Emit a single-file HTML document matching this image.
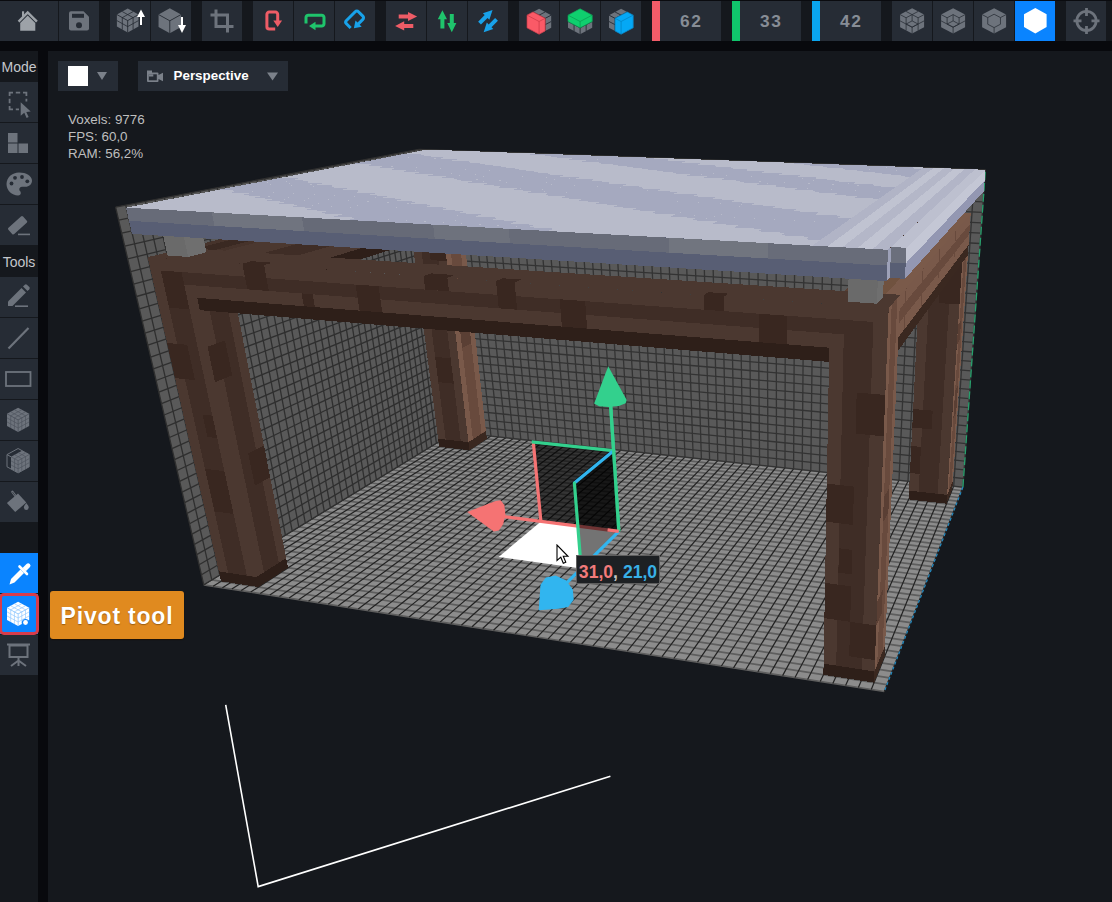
<!DOCTYPE html>
<html><head><meta charset="utf-8"><title>Voxel editor</title>
<style>
html,body{margin:0;padding:0;}
body{width:1112px;height:902px;overflow:hidden;background:#08090d;font-family:"Liberation Sans",sans-serif;position:relative;}
#vp{position:absolute;left:48px;top:51px;width:1064px;height:851px;background:#15181d;overflow:hidden;}
#vp>svg{position:absolute;left:-48px;top:-51px;}
#top{position:absolute;left:0;top:0;width:1112px;height:40px;background:#15181d;border-top:1px solid #0a0b0f;}
.tb{margin-top:-1px}
.tb{position:absolute;top:1px;height:40px;width:40px;background:#262c35;}
.tb svg,.sb svg{display:block}
.num{color:#878d96;font-weight:bold;font-size:17.300px;letter-spacing:1.600px;padding-left:1.600px;box-sizing:border-box;line-height:40px;text-align:center;}
#side{position:absolute;left:0;top:51px;width:38px;height:851px;background:#15181d;}
.sb{position:absolute;left:0;width:38px;height:40px;background:#262c35;}
.lbl{position:absolute;left:0;width:38px;color:#c4c7cc;font-size:14px;text-align:center;}
.dd{position:absolute;top:10px;height:30px;background:#262c35;}
#stats{position:absolute;left:20px;top:59.500px;color:#bfbfbf;font-size:13.400px;line-height:17.200px;white-space:pre;}
#tip{position:absolute;left:2px;top:540px;width:134px;height:48px;background:#e08a1f;border-radius:3px;color:#fff;font-weight:bold;font-size:23px;line-height:50px;text-align:center;letter-spacing:0.800px;text-shadow:0 1px 1px rgba(90,50,0,.5);box-shadow:0 1px 1px #1c1208;}
#coord{position:absolute;left:528px;top:504px;width:82px;height:27px;background:#1d2023;border:1px solid #5e5e5e;font-weight:bold;font-size:17.600px;line-height:33px;overflow:hidden;text-align:center;color:#aaa;white-space:pre;}
</style></head><body>
<div id="vp"><svg width="1112" height="902" viewBox="0 0 1112 902">
<g>
<polygon points="962.9,487.1 454.4,432.2 203.8,584.8 884.3,691.5" fill="#8c8c8c" />
<path d="M962.9 487.1L454.4 432.2M961.6 490.5L450.0 434.9M960.3 494.0L445.5 437.6M958.9 497.5L441.0 440.3M957.5 501.1L436.4 443.1M956.1 504.8L431.8 446.0M954.7 508.4L427.1 448.8M953.3 512.2L422.3 451.7M951.8 516.0L417.5 454.7M950.3 519.9L412.6 457.6M948.8 523.8L407.6 460.7M947.3 527.8L402.6 463.7M945.7 531.8L397.5 466.8M944.2 535.9L392.3 470.0M942.6 540.1L387.1 473.2M940.9 544.3L381.8 476.4M939.3 548.6L376.4 479.7M937.6 553.0L370.9 483.0M935.9 557.4L365.4 486.4M934.1 562.0L359.8 489.8M932.4 566.6L354.1 493.3M930.6 571.2L348.3 496.8M928.7 576.0L342.4 500.3M926.9 580.8L336.5 504.0M925.0 585.8L330.4 507.7M923.0 590.8L324.3 511.4M921.1 595.9L318.1 515.2M919.1 601.0L311.7 519.0M917.1 606.3L305.3 522.9M915.0 611.7L298.8 526.9M912.9 617.2L292.2 530.9M910.7 622.7L285.4 535.0M908.5 628.4L278.6 539.2M906.3 634.2L271.7 543.4M904.1 640.1L264.6 547.7M901.7 646.1L257.4 552.1M899.4 652.2L250.2 556.5M897.0 658.4L242.7 561.0M894.5 664.8L235.2 565.6M892.0 671.3L227.6 570.3M889.5 677.9L219.8 575.0M886.9 684.6L211.8 579.8M884.3 691.5L203.8 584.8" stroke="#5e5e5e" stroke-width="1.7" fill="none" />
<path d="M962.9 487.1L884.3 691.5M953.7 486.1L871.3 689.5M944.5 485.1L858.4 687.5M935.3 484.1L845.6 685.5M926.2 483.1L832.8 683.5M917.1 482.1L820.2 681.5M908.0 481.2L807.6 679.5M899.0 480.2L795.0 677.5M890.0 479.2L782.6 675.6M881.1 478.3L770.2 673.6M872.2 477.3L757.9 671.7M863.3 476.3L745.7 669.8M854.5 475.4L733.5 667.9M845.7 474.4L721.4 666.0M836.9 473.5L709.4 664.1M828.2 472.5L697.5 662.2M819.5 471.6L685.6 660.4M810.8 470.7L673.8 658.5M802.2 469.7L662.0 656.7M793.6 468.8L650.3 654.8M785.0 467.9L638.7 653.0M776.5 467.0L627.2 651.2M768.0 466.1L615.7 649.4M759.6 465.1L604.3 647.6M751.2 464.2L592.9 645.8M742.8 463.3L581.6 644.0M734.4 462.4L570.4 642.3M726.1 461.5L559.2 640.5M717.8 460.6L548.1 638.8M709.6 459.7L537.1 637.1M701.4 458.9L526.1 635.3M693.2 458.0L515.2 633.6M685.0 457.1L504.3 631.9M676.9 456.2L493.5 630.2M668.8 455.3L482.7 628.5M660.7 454.5L472.0 626.8M652.7 453.6L461.4 625.2M644.7 452.7L450.8 623.5M636.7 451.9L440.3 621.9M628.8 451.0L429.9 620.2M620.9 450.2L419.4 618.6M613.0 449.3L409.1 617.0M605.2 448.5L398.8 615.4M597.4 447.6L388.6 613.7M589.6 446.8L378.4 612.1M581.8 445.9L368.2 610.6M574.1 445.1L358.2 609.0M566.4 444.3L348.1 607.4M558.7 443.5L338.2 605.8M551.1 442.6L328.2 604.3M543.5 441.8L318.4 602.7M535.9 441.0L308.5 601.2M528.4 440.2L298.8 599.7M520.8 439.4L289.1 598.1M513.3 438.6L279.4 596.6M505.9 437.7L269.8 595.1M498.4 436.9L260.2 593.6M491.0 436.1L250.7 592.1M483.6 435.3L241.2 590.6M476.3 434.6L231.8 589.1M468.9 433.8L222.4 587.7M461.6 433.0L213.1 586.2M454.4 432.2L203.8 584.8" stroke="#222222" stroke-width="1.2" fill="none" />
<polygon points="454.4,432.2 419.1,149.3 115.6,207.1 203.8,584.8" fill="#595959" />
<path d="M454.4 432.2L203.8 584.8M453.4 424.4L201.5 574.8M452.4 416.6L199.1 564.7M451.5 408.8L196.7 554.6M450.5 400.9L194.4 544.4M449.5 392.9L192.0 534.1M448.5 384.9L189.5 523.7M447.5 376.9L187.1 513.3M446.5 368.8L184.6 502.7M445.5 360.6L182.1 492.1M444.4 352.5L179.6 481.3M443.4 344.2L177.1 470.5M442.4 335.9L174.5 459.6M441.3 327.6L172.0 448.6M440.3 319.2L169.4 437.5M439.2 310.7L166.8 426.3M438.2 302.3L164.1 415.0M437.1 293.7L161.5 403.6M436.1 285.1L158.8 392.1M435.0 276.4L156.1 380.5M433.9 267.7L153.4 368.9M432.8 259.0L150.6 357.1M431.7 250.1L147.8 345.2M430.6 241.3L145.0 333.2M429.5 232.3L142.2 321.1M428.4 223.3L139.3 308.9M427.2 214.3L136.5 296.5M426.1 205.2L133.5 284.1M425.0 196.0L130.6 271.6M423.8 186.8L127.7 258.9M422.7 177.5L124.7 246.1M421.5 168.2L121.7 233.2M420.3 158.8L118.6 220.2M419.1 149.3L115.6 207.1" stroke="#2f2f2f" stroke-width="1.3" fill="none" />
<path d="M454.4 432.2L419.1 149.3M450.0 434.9L414.0 150.3M445.5 437.6L408.8 151.3M441.0 440.3L403.5 152.3M436.4 443.1L398.2 153.3M431.8 446.0L392.7 154.3M427.1 448.8L387.2 155.4M422.3 451.7L381.6 156.5M417.5 454.7L375.9 157.5M412.6 457.6L370.2 158.6M407.6 460.7L364.3 159.7M402.6 463.7L358.4 160.9M397.5 466.8L352.3 162.0M392.3 470.0L346.2 163.2M387.1 473.2L340.0 164.4M381.8 476.4L333.7 165.6M376.4 479.7L327.2 166.8M370.9 483.0L320.7 168.0M365.4 486.4L314.1 169.3M359.8 489.8L307.4 170.6M354.1 493.3L300.5 171.9M348.3 496.8L293.6 173.2M342.4 500.3L286.5 174.6M336.5 504.0L279.3 175.9M330.4 507.7L272.0 177.3M324.3 511.4L264.6 178.7M318.1 515.2L257.0 180.2M311.7 519.0L249.3 181.6M305.3 522.9L241.5 183.1M298.8 526.9L233.5 184.6M292.2 530.9L225.4 186.2M285.4 535.0L217.2 187.7M278.6 539.2L208.8 189.3M271.7 543.4L200.2 191.0M264.6 547.7L191.5 192.6M257.4 552.1L182.6 194.3M250.2 556.5L173.6 196.0M242.7 561.0L164.4 197.8M235.2 565.6L155.0 199.6M227.6 570.3L145.4 201.4M219.8 575.0L135.6 203.3M211.8 579.8L125.7 205.2M203.8 584.8L115.6 207.1" stroke="#2f2f2f" stroke-width="1.3" fill="none" />
<polygon points="962.9,487.1 454.4,432.2 419.1,149.3 985.4,169.8" fill="#595959" />
<path d="M962.9 487.1L454.4 432.2M963.6 478.5L453.4 424.4M964.2 469.9L452.4 416.6M964.8 461.2L451.5 408.8M965.4 452.4L450.5 400.9M966.0 443.6L449.5 392.9M966.6 434.7L448.5 384.9M967.3 425.8L447.5 376.9M967.9 416.7L446.5 368.8M968.6 407.7L445.5 360.6M969.2 398.6L444.4 352.5M969.9 389.4L443.4 344.2M970.5 380.1L442.4 335.9M971.2 370.8L441.3 327.6M971.8 361.4L440.3 319.2M972.5 352.0L439.2 310.7M973.2 342.4L438.2 302.3M973.8 332.9L437.1 293.7M974.5 323.2L436.1 285.1M975.2 313.5L435.0 276.4M975.9 303.7L433.9 267.7M976.6 293.8L432.8 259.0M977.3 283.9L431.7 250.1M978.0 273.9L430.6 241.3M978.7 263.8L429.5 232.3M979.4 253.7L428.4 223.3M980.2 243.5L427.2 214.3M980.9 233.2L426.1 205.2M981.6 222.8L425.0 196.0M982.4 212.3L423.8 186.8M983.1 201.8L422.7 177.5M983.9 191.2L421.5 168.2M984.6 180.5L420.3 158.8M985.4 169.8L419.1 149.3" stroke="#333333" stroke-width="1.3" fill="none" />
<path d="M962.9 487.1L985.4 169.8M953.7 486.1L974.9 169.4M944.5 485.1L964.6 169.0M935.3 484.1L954.2 168.6M926.2 483.1L943.9 168.3M917.1 482.1L933.7 167.9M908.0 481.2L923.5 167.5M899.0 480.2L913.3 167.2M890.0 479.2L903.2 166.8M881.1 478.3L893.2 166.4M872.2 477.3L883.1 166.1M863.3 476.3L873.2 165.7M854.5 475.4L863.3 165.4M845.7 474.4L853.4 165.0M836.9 473.5L843.6 164.6M828.2 472.5L833.8 164.3M819.5 471.6L824.0 163.9M810.8 470.7L814.3 163.6M802.2 469.7L804.7 163.2M793.6 468.8L795.1 162.9M785.0 467.9L785.5 162.5M776.5 467.0L776.0 162.2M768.0 466.1L766.5 161.9M759.6 465.1L757.1 161.5M751.2 464.2L747.7 161.2M742.8 463.3L738.3 160.8M734.4 462.4L729.0 160.5M726.1 461.5L719.7 160.2M717.8 460.6L710.5 159.8M709.6 459.7L701.3 159.5M701.4 458.9L692.1 159.2M693.2 458.0L683.0 158.8M685.0 457.1L674.0 158.5M676.9 456.2L664.9 158.2M668.8 455.3L655.9 157.9M660.7 454.5L647.0 157.5M652.7 453.6L638.1 157.2M644.7 452.7L629.2 156.9M636.7 451.9L620.4 156.6M628.8 451.0L611.6 156.3M620.9 450.2L602.8 155.9M613.0 449.3L594.1 155.6M605.2 448.5L585.4 155.3M597.4 447.6L576.7 155.0M589.6 446.8L568.1 154.7M581.8 445.9L559.5 154.4M574.1 445.1L551.0 154.1M566.4 444.3L542.5 153.8M558.7 443.5L534.0 153.5M551.1 442.6L525.6 153.2M543.5 441.8L517.2 152.9M535.9 441.0L508.8 152.6M528.4 440.2L500.5 152.3M520.8 439.4L492.2 152.0M513.3 438.6L484.0 151.7M505.9 437.7L475.7 151.4M498.4 436.9L467.6 151.1M491.0 436.1L459.4 150.8M483.6 435.3L451.3 150.5M476.3 434.6L443.2 150.2M468.9 433.8L435.1 149.9M461.6 433.0L427.1 149.6M454.4 432.2L419.1 149.3" stroke="#333333" stroke-width="1.3" fill="none" />
<path d="M962.9 487.1L985.4 169.8" stroke="#26a06c" stroke-width="1.3" fill="none" stroke-dasharray="8 3"/>
<path d="M962.9 487.1L884.3 691.5" stroke="#2389c0" stroke-width="1.3" fill="none" stroke-dasharray="3 2.5"/>
</g>
<g shape-rendering="crispEdges">
<polygon points="469.4,450.2 486.8,438.9 458.8,189.9 438.9,195.1" fill="#684a3d" />
<polygon points="469.4,450.2 486.8,438.9 485.9,431.0 468.4,442.1" fill="#3a2820" />
<polygon points="468.4,442.1 472.9,439.3 444.0,193.7 438.9,195.1" fill="#79594a" />
<polygon points="472.9,439.3 481.6,433.7 453.9,191.1 444.0,193.7" fill="#684a3d" />
<polygon points="481.6,433.7 485.9,431.0 458.8,189.9 453.9,191.1" fill="#79594a" />
<polygon points="462.1,348.0 471.3,343.5 469.4,326.4 460.1,330.7" fill="#5a3f34" />
<polygon points="439.2,446.8 469.4,450.2 438.9,195.1 406.0,193.5" fill="#3f2d26" />
<polygon points="439.2,446.8 469.4,450.2 468.4,442.1 438.2,438.8" fill="#2e1f19" />
<polygon points="438.2,438.8 445.7,439.6 414.2,193.9 406.0,193.5" fill="#4b3830" />
<polygon points="445.7,439.6 460.8,441.3 430.6,194.7 414.2,193.9" fill="#3f2d26" />
<polygon points="460.8,441.3 468.4,442.1 438.9,195.1 430.6,194.7" fill="#4b3830" />
<polygon points="438.3,382.2 453.8,383.7 450.6,358.3 435.1,356.9" fill="#392720" />
<polygon points="421.7,312.9 437.4,314.1 434.0,287.3 418.2,286.2" fill="#392720" />
<polygon points="430.6,260.1 446.8,261.1 444.5,242.6 428.3,241.6" fill="#392720" />
<polygon points="946.6,503.7 952.3,489.5 970.7,213.5 964.9,220.1" fill="#684a3d" />
<polygon points="946.6,503.7 952.3,489.5 952.9,480.9 947.1,494.8" fill="#3a2820" />
<polygon points="947.1,494.8 948.6,491.3 966.4,218.4 964.9,220.1" fill="#79594a" />
<polygon points="948.6,491.3 951.5,484.3 969.3,215.1 966.4,218.4" fill="#684a3d" />
<polygon points="951.5,484.3 952.9,480.9 970.7,213.5 969.3,215.1" fill="#79594a" />
<polygon points="953.3,418.8 956.2,412.7 958.1,384.9 955.2,390.6" fill="#5a3f34" />
<polygon points="956.9,344.8 959.8,339.6 961.1,319.9 958.2,324.8" fill="#5a3f34" />
<polygon points="908.7,499.4 946.6,503.7 964.9,220.1 922.7,218.1" fill="#3f2d26" />
<polygon points="908.7,499.4 946.6,503.7 947.1,494.8 909.1,490.7" fill="#2e1f19" />
<polygon points="909.1,490.7 918.6,491.7 933.2,218.6 922.7,218.1" fill="#4b3830" />
<polygon points="918.6,491.7 937.6,493.8 954.3,219.6 933.2,218.6" fill="#3f2d26" />
<polygon points="937.6,493.8 947.1,494.8 964.9,220.1 954.3,219.6" fill="#4b3830" />
<polygon points="938.9,303.1 959.5,304.5 962.8,252.4 941.9,251.2" fill="#392720" />
<polygon points="912.3,427.6 931.7,429.4 932.7,410.7 913.2,409.0" fill="#392720" />
<polygon points="910.0,472.9 919.5,474.0 921.0,446.9 911.3,445.9" fill="#392720" />
<polygon points="426.7,188.4 970.7,213.5 964.9,220.1 406.0,193.5" fill="#46332b" />
<polygon points="443.4,233.2 920.6,260.6 922.7,218.1 438.9,195.1" fill="#4b3830" />
<polygon points="440.0,204.7 922.2,228.9 922.7,218.1 438.9,195.1" fill="#4b3830" />
<polygon points="441.2,214.2 921.6,239.5 922.2,228.9 440.0,204.7" fill="#3f2d26" />
<polygon points="442.3,223.7 921.1,250.1 921.6,239.5 441.2,214.2" fill="#4b3830" />
<polygon points="443.4,233.2 920.6,260.6 921.1,250.1 442.3,223.7" fill="#2e1f19" />
<polygon points="491.2,216.9 508.1,217.8 506.2,198.3 489.2,197.5" fill="#392720" />
<polygon points="613.5,233.2 631.5,234.1 630.4,214.2 612.4,213.3" fill="#392720" />
<polygon points="733.0,229.6 752.1,230.6 751.8,210.0 732.6,209.1" fill="#392720" />
<polygon points="840.0,245.6 860.0,246.7 860.5,225.8 840.4,224.8" fill="#392720" />
<polygon points="426.7,188.4 458.8,189.9 189.2,260.1 147.7,257.2" fill="#46332b" />
<polygon points="434.7,188.8 450.7,189.5 178.7,259.3 158.0,257.9" fill="#3a2922" />
<polygon points="234.9,299.1 443.4,233.2 438.9,195.1 225.3,250.6" fill="#3f2d26" />
<polygon points="234.9,299.1 443.4,233.2 442.3,223.7 232.5,287.2" fill="#2e1f19" />
<polygon points="227.7,262.9 440.0,204.7 438.9,195.1 225.3,250.6" fill="#4b3830" />
<polygon points="232.5,287.2 442.3,223.7 441.2,214.2 230.1,275.1" fill="#4b3830" />
<polygon points="929.8,211.6 970.7,213.5 888.7,308.1 830.0,304.1" fill="#70523f" />
<polygon points="929.8,211.6 939.9,212.1 844.5,305.1 830.0,304.1" fill="#5a4034" />
<polygon points="960.4,213.0 970.7,213.5 888.7,308.1 873.9,307.1" fill="#7a5a4a" />
<polygon points="886.4,366.6 967.9,255.0 970.7,213.5 888.7,308.1" fill="#684a3d" />
<polygon points="886.4,366.6 967.9,255.0 968.6,244.8 887.0,352.2" fill="#3a2820" />
<polygon points="888.1,323.0 970.0,224.0 970.7,213.5 888.7,308.1" fill="#79594a" />
<polygon points="887.5,337.7 969.3,234.4 970.0,224.0 888.1,323.0" fill="#684a3d" />
<polygon points="887.0,352.2 968.6,244.8 969.3,234.4 887.5,337.7" fill="#79594a" />
<polygon points="903.7,330.2 904.7,328.9 906.6,287.4 905.6,288.6" fill="#684a3d" />
<polygon points="920.7,307.9 921.6,306.7 923.6,267.9 922.6,268.9" fill="#684a3d" />
<polygon points="937.4,285.9 938.1,284.9 940.2,248.7 939.4,249.6" fill="#684a3d" />
<polygon points="953.4,264.7 954.1,263.9 956.2,230.2 955.5,231.0" fill="#684a3d" />
<polygon points="258.4,587.1 288.1,567.8 225.3,250.6 189.2,260.1" fill="#3f2d26" />
<polygon points="258.4,587.1 288.1,567.8 286.2,558.1 256.3,577.1" fill="#2e1f19" />
<polygon points="256.3,577.1 264.0,572.2 198.5,257.6 189.2,260.1" fill="#4b3830" />
<polygon points="264.0,572.2 278.9,562.7 216.5,252.9 198.5,257.6" fill="#3f2d26" />
<polygon points="278.9,562.7 286.2,558.1 225.3,250.6 216.5,252.9" fill="#4b3830" />
<polygon points="215.0,382.2 232.2,375.3 225.0,340.4 207.5,346.7" fill="#392720" />
<polygon points="254.8,485.6 270.2,477.3 264.0,445.7 248.2,453.5" fill="#392720" />
<polygon points="221.1,581.3 258.4,587.1 189.2,260.1 147.7,257.2" fill="#3f2d26" />
<polygon points="221.1,581.3 258.4,587.1 256.3,577.1 218.8,571.4" fill="#2e1f19" />
<polygon points="218.8,571.4 228.1,572.8 158.0,257.9 147.7,257.2" fill="#4b3830" />
<polygon points="228.1,572.8 246.9,575.6 178.7,259.3 158.0,257.9" fill="#3f2d26" />
<polygon points="246.9,575.6 256.3,577.1 189.2,260.1 178.7,259.3" fill="#4b3830" />
<polygon points="169.1,307.7 189.5,309.4 181.5,272.0 160.8,270.5" fill="#392720" />
<polygon points="175.1,378.1 195.0,380.1 187.2,344.8 167.1,343.0" fill="#392720" />
<polygon points="214.5,511.4 233.6,514.0 224.4,471.2 205.0,468.8" fill="#392720" />
<polygon points="207.4,437.0 217.3,438.2 212.4,415.7 202.5,414.6" fill="#392720" />
<polygon points="874.1,682.6 884.6,656.6 900.2,294.8 888.7,308.1" fill="#684a3d" />
<polygon points="874.1,682.6 884.6,656.6 885.1,645.7 874.5,671.4" fill="#3a2820" />
<polygon points="874.5,671.4 877.2,664.8 891.7,304.7 888.7,308.1" fill="#79594a" />
<polygon points="877.2,664.8 882.5,651.9 897.4,298.0 891.7,304.7" fill="#684a3d" />
<polygon points="882.5,651.9 885.1,645.7 900.2,294.8 897.4,298.0" fill="#79594a" />
<polygon points="882.9,522.7 888.4,512.0 889.5,487.1 883.9,497.4" fill="#5a3f34" />
<polygon points="876.3,625.5 881.8,613.1 882.7,589.8 877.2,601.9" fill="#5a3f34" />
<polygon points="823.4,674.8 874.1,682.6 888.7,308.1 830.0,304.1" fill="#3f2d26" />
<polygon points="823.4,674.8 874.1,682.6 874.5,671.4 823.6,663.7" fill="#2e1f19" />
<polygon points="823.6,663.7 836.2,665.6 844.5,305.1 830.0,304.1" fill="#4b3830" />
<polygon points="836.2,665.6 861.7,669.5 873.9,307.1 844.5,305.1" fill="#3f2d26" />
<polygon points="861.7,669.5 874.5,671.4 888.7,308.1 873.9,307.1" fill="#4b3830" />
<polygon points="855.5,433.6 883.7,436.4 885.3,395.0 856.7,392.5" fill="#392720" />
<polygon points="826.1,521.7 852.9,525.0 854.0,486.6 826.8,483.6" fill="#392720" />
<polygon points="838.4,572.6 851.5,574.3 852.2,549.9 838.9,548.2" fill="#392720" />
<polygon points="824.4,618.2 850.2,621.8 851.2,586.4 825.0,582.9" fill="#392720" />
<polygon points="849.2,656.3 874.9,660.1 876.3,625.5 850.2,621.8" fill="#392720" />
<polygon points="185.0,248.0 900.2,294.8 888.7,308.1 147.7,257.2" fill="#4b3830" />
<polygon points="199.8,310.2 828.9,361.9 830.0,304.1 189.2,260.1" fill="#4b3830" />
<polygon points="191.9,272.8 829.7,318.8 830.0,304.1 189.2,260.1" fill="#4b3830" />
<polygon points="194.5,285.4 829.5,333.3 829.7,318.8 191.9,272.8" fill="#3f2d26" />
<polygon points="197.2,297.8 829.2,347.7 829.5,333.3 194.5,285.4" fill="#4b3830" />
<polygon points="199.8,310.2 828.9,361.9 829.2,347.7 197.2,297.8" fill="#2e1f19" />
<polygon points="247.3,289.3 268.9,291.0 264.1,265.2 242.4,263.7" fill="#392720" />
<polygon points="303.9,306.3 314.9,307.1 312.7,294.3 301.6,293.4" fill="#392720" />
<polygon points="359.6,310.6 382.3,312.4 378.5,286.2 355.6,284.6" fill="#392720" />
<polygon points="425.2,289.6 449.0,291.3 447.4,277.8 423.5,276.1" fill="#392720" />
<polygon points="498.8,308.3 517.2,309.7 514.6,282.4 496.0,281.1" fill="#392720" />
<polygon points="561.9,326.6 587.1,328.6 585.2,301.1 559.7,299.3" fill="#392720" />
<polygon points="703.9,309.7 724.3,311.2 724.0,296.8 703.5,295.4" fill="#392720" />
<polygon points="759.1,342.2 786.9,344.4 786.9,315.7 758.9,313.7" fill="#392720" />
<polygon points="150.6,269.8 191.9,272.8 189.2,260.1 147.7,257.2" fill="#4b3830" />
<polygon points="829.7,318.8 888.1,323.0 888.7,308.1 830.0,304.1" fill="#4b3830" />
<polygon points="184.2,284.6 194.5,285.4 191.9,272.8 181.5,272.0" fill="#3f2d26" />
<polygon points="829.5,333.3 843.8,334.4 844.2,319.8 829.7,318.8" fill="#3f2d26" />
<polygon points="251.3,261.2 272.8,262.7 264.1,265.2 242.4,263.7" fill="#392720" />
<polygon points="430.9,273.4 454.6,275.0 447.4,277.8 423.5,276.1" fill="#392720" />
<polygon points="502.9,278.3 521.3,279.5 514.6,282.4 496.0,281.1" fill="#392720" />
<polygon points="708.4,292.2 728.7,293.6 724.0,296.8 703.5,295.4" fill="#392720" />
<polygon points="435.7,193.4 445.8,190.8 443.6,171.7 433.4,174.1" fill="#6f6f6f" />
<polygon points="419.4,192.6 435.7,193.4 433.4,174.1 417.0,173.4" fill="#6a6a6a" />
<polygon points="955.9,217.9 958.9,214.6 960.2,193.3 957.2,196.3" fill="#6f6f6f" />
<polygon points="934.9,216.9 955.9,217.9 957.2,196.3 936.1,195.4" fill="#6a6a6a" />
<polygon points="188.1,256.9 206.3,252.3 201.2,227.2 182.7,231.4" fill="#6f6f6f" />
<polygon points="167.5,255.5 188.1,256.9 182.7,231.4 162.0,230.2" fill="#6a6a6a" />
<polygon points="877.0,303.7 883.1,297.1 884.1,267.9 878.0,273.9" fill="#6f6f6f" />
<polygon points="848.0,301.7 877.0,303.7 878.0,273.9 848.7,272.1" fill="#6a6a6a" />
<polygon points="427.1,149.6 974.9,169.4 888.0,249.8 126.0,207.7" fill="#b8bbca" />
<polygon points="795.1,162.9 913.3,167.2 911.5,168.4 792.3,164.1" fill="#a5a9bf" />
<polygon points="534.0,153.5 655.9,157.9 652.3,159.0 529.6,154.5" fill="#a5a9bf" />
<polygon points="811.7,164.8 921.7,168.8 919.9,170.1 809.1,166.0" fill="#a5a9bf" />
<polygon points="546.7,155.1 670.4,159.6 666.8,160.8 542.2,156.2" fill="#a5a9bf" />
<polygon points="828.8,166.7 919.9,170.1 918.0,171.3 826.3,167.9" fill="#a5a9bf" />
<polygon points="559.6,156.8 685.2,161.4 681.7,162.6 555.2,157.9" fill="#a5a9bf" />
<polygon points="846.4,168.7 918.0,171.3 916.2,172.7 844.0,170.0" fill="#a5a9bf" />
<polygon points="572.8,158.6 700.4,163.3 696.9,164.5 568.5,159.7" fill="#a5a9bf" />
<polygon points="864.3,170.7 916.2,172.7 914.3,174.0 862.0,172.0" fill="#a5a9bf" />
<polygon points="586.3,160.3 716.0,165.2 712.6,166.4 582.1,161.5" fill="#a5a9bf" />
<polygon points="406.3,153.6 422.8,154.2 417.5,155.3 400.9,154.6" fill="#a5a9bf" />
<polygon points="882.8,172.8 914.3,174.0 912.4,175.3 880.6,174.1" fill="#a5a9bf" />
<polygon points="600.2,162.2 731.9,167.1 728.6,168.4 596.0,163.3" fill="#a5a9bf" />
<polygon points="400.9,154.6 434.2,155.9 428.9,157.0 395.5,155.7" fill="#a5a9bf" />
<polygon points="901.7,174.9 912.4,175.3 910.4,176.7 899.7,176.3" fill="#a5a9bf" />
<polygon points="614.4,164.0 748.2,169.1 745.0,170.4 610.3,165.2" fill="#a5a9bf" />
<polygon points="395.5,155.7 445.8,157.6 440.6,158.7 389.9,156.8" fill="#a5a9bf" />
<polygon points="629.0,165.9 765.0,171.2 761.9,172.5 624.9,167.2" fill="#a5a9bf" />
<polygon points="389.9,156.8 457.8,159.4 452.6,160.5 384.3,157.9" fill="#a5a9bf" />
<polygon points="643.9,167.9 782.2,173.3 779.2,174.6 639.9,169.2" fill="#a5a9bf" />
<polygon points="384.3,157.9 470.0,161.2 464.8,162.3 378.6,159.0" fill="#a5a9bf" />
<polygon points="659.2,169.9 799.9,175.4 797.0,176.8 655.3,171.2" fill="#a5a9bf" />
<polygon points="378.6,159.0 482.6,163.0 477.4,164.2 372.8,160.1" fill="#a5a9bf" />
<polygon points="675.0,172.0 818.0,177.6 815.2,179.0 671.1,173.3" fill="#a5a9bf" />
<polygon points="372.8,160.1 495.4,164.9 490.3,166.1 366.9,161.2" fill="#a5a9bf" />
<polygon points="691.1,174.1 836.6,179.9 834.0,181.3 687.3,175.5" fill="#a5a9bf" />
<polygon points="366.9,161.2 508.6,166.8 503.5,168.1 360.9,162.4" fill="#a5a9bf" />
<polygon points="707.6,176.3 855.8,182.2 853.2,183.7 703.9,177.7" fill="#a5a9bf" />
<polygon points="360.9,162.4 522.1,168.8 517.0,170.1 354.8,163.5" fill="#a5a9bf" />
<polygon points="724.6,178.5 875.5,184.6 873.1,186.1 721.0,179.9" fill="#a5a9bf" />
<polygon points="372.2,164.2 535.9,170.9 530.9,172.2 366.1,165.4" fill="#a5a9bf" />
<polygon points="742.1,180.8 895.7,187.1 893.4,188.7 738.6,182.3" fill="#a5a9bf" />
<polygon points="383.8,166.2 550.1,173.0 545.2,174.3 377.7,167.4" fill="#a5a9bf" />
<polygon points="760.0,183.2 893.4,188.7 891.1,190.3 756.6,184.7" fill="#a5a9bf" />
<polygon points="395.6,168.1 564.7,175.1 559.8,176.5 389.6,169.4" fill="#a5a9bf" />
<polygon points="778.5,185.6 891.1,190.3 888.8,191.9 775.2,187.1" fill="#a5a9bf" />
<polygon points="407.8,170.2 579.7,177.3 574.9,178.7 401.8,171.4" fill="#a5a9bf" />
<polygon points="797.4,188.1 888.8,191.9 886.4,193.6 794.3,189.7" fill="#a5a9bf" />
<polygon points="420.3,172.2 595.1,179.6 590.3,181.0 414.3,173.6" fill="#a5a9bf" />
<polygon points="816.9,190.6 886.4,193.6 884.0,195.3 813.9,192.3" fill="#a5a9bf" />
<polygon points="433.1,174.4 610.9,181.9 606.2,183.4 427.2,175.7" fill="#a5a9bf" />
<polygon points="837.0,193.3 884.0,195.3 881.5,197.0 834.1,195.0" fill="#a5a9bf" />
<polygon points="446.3,176.5 627.1,184.3 622.5,185.8 440.4,177.9" fill="#a5a9bf" />
<polygon points="857.7,196.0 881.5,197.0 879.0,198.8 855.0,197.7" fill="#a5a9bf" />
<polygon points="459.8,178.8 643.8,186.7 639.3,188.3 453.9,180.2" fill="#a5a9bf" />
<polygon points="473.7,181.1 661.0,189.3 656.5,190.9 467.8,182.6" fill="#a5a9bf" />
<polygon points="487.9,183.4 678.6,191.9 674.3,193.5 482.1,185.0" fill="#a5a9bf" />
<polygon points="502.6,185.9 696.8,194.5 692.6,196.3 496.8,187.4" fill="#a5a9bf" />
<polygon points="517.7,188.4 715.6,197.3 711.5,199.1 512.0,190.0" fill="#a5a9bf" />
<polygon points="281.2,177.7 299.9,178.6 292.6,180.0 273.9,179.2" fill="#a5a9bf" />
<polygon points="533.2,191.0 734.9,200.1 730.9,202.0 527.6,192.6" fill="#a5a9bf" />
<polygon points="273.9,179.2 311.5,180.9 304.3,182.3 266.4,180.6" fill="#a5a9bf" />
<polygon points="549.2,193.6 754.8,203.1 750.9,204.9 543.6,195.3" fill="#a5a9bf" />
<polygon points="266.4,180.6 323.6,183.2 316.3,184.7 258.7,182.1" fill="#a5a9bf" />
<polygon points="565.6,196.3 775.3,206.1 771.6,208.0 560.1,198.1" fill="#a5a9bf" />
<polygon points="258.7,182.1 335.9,185.7 328.7,187.2 251.0,183.6" fill="#a5a9bf" />
<polygon points="582.6,199.1 796.5,209.2 792.9,211.2 577.1,201.0" fill="#a5a9bf" />
<polygon points="251.0,183.6 348.6,188.2 341.4,189.8 243.1,185.1" fill="#a5a9bf" />
<polygon points="600.0,202.0 818.3,212.4 815.0,214.5 594.7,203.9" fill="#a5a9bf" />
<polygon points="243.1,185.1 361.7,190.7 354.5,192.4 235.0,186.6" fill="#a5a9bf" />
<polygon points="618.0,205.0 840.9,215.7 837.7,217.9 612.8,207.0" fill="#a5a9bf" />
<polygon points="235.0,186.6 375.1,193.4 367.9,195.1 226.8,188.2" fill="#a5a9bf" />
<polygon points="636.6,208.1 850.9,218.5 847.8,220.7 631.5,210.1" fill="#a5a9bf" />
<polygon points="226.8,188.2 389.0,196.1 381.8,197.8 218.5,189.8" fill="#a5a9bf" />
<polygon points="655.8,211.3 847.8,220.7 844.6,223.0 650.8,213.3" fill="#a5a9bf" />
<polygon points="238.1,190.8 403.2,198.9 396.1,200.7 229.8,192.4" fill="#a5a9bf" />
<polygon points="675.6,214.6 844.6,223.0 841.3,225.3 670.7,216.7" fill="#a5a9bf" />
<polygon points="249.8,193.4 417.9,201.8 410.8,203.6 241.4,195.1" fill="#a5a9bf" />
<polygon points="696.1,218.0 841.3,225.3 838.0,227.6 691.3,220.2" fill="#a5a9bf" />
<polygon points="261.8,196.2 433.1,204.8 426.0,206.7 253.4,197.9" fill="#a5a9bf" />
<polygon points="717.2,221.5 838.0,227.6 834.6,230.0 712.6,223.8" fill="#a5a9bf" />
<polygon points="274.1,199.0 448.7,207.8 441.7,209.8 265.8,200.8" fill="#a5a9bf" />
<polygon points="739.1,225.1 834.6,230.0 831.1,232.5 734.6,227.5" fill="#a5a9bf" />
<polygon points="286.9,201.9 464.9,211.0 457.9,213.1 278.5,203.7" fill="#a5a9bf" />
<polygon points="761.8,228.9 831.1,232.5 827.5,235.0 757.5,231.3" fill="#a5a9bf" />
<polygon points="300.0,204.9 481.5,214.3 474.6,216.4 291.6,206.8" fill="#a5a9bf" />
<polygon points="785.2,232.8 827.5,235.0 823.9,237.6 781.1,235.3" fill="#a5a9bf" />
<polygon points="313.6,207.9 498.8,217.7 491.9,219.9 305.2,209.9" fill="#a5a9bf" />
<polygon points="809.5,236.8 823.9,237.6 820.1,240.2 805.6,239.4" fill="#a5a9bf" />
<polygon points="327.5,211.1 516.6,221.2 509.8,223.4 319.1,213.2" fill="#a5a9bf" />
<polygon points="342.0,214.4 535.0,224.8 528.3,227.1 333.6,216.5" fill="#a5a9bf" />
<polygon points="356.9,217.8 554.0,228.6 547.4,231.0 348.5,220.0" fill="#a5a9bf" />
<polygon points="974.9,169.4 985.4,169.8 906.4,247.8 891.1,247.0" fill="#bdc0cf" />
<polygon points="964.6,169.0 974.9,169.4 888.0,249.8 872.7,249.0" fill="#b2b5c7" />
<polygon points="954.2,168.6 964.6,169.0 872.7,249.0 857.4,248.1" fill="#c1c4d2" />
<polygon points="943.9,168.3 954.2,168.6 857.4,248.1 842.3,247.3" fill="#b4b7c8" />
<polygon points="933.7,167.9 943.9,168.3 842.3,247.3 827.3,246.5" fill="#c0c3d1" />
<polygon points="923.5,167.5 933.7,167.9 827.3,246.5 812.4,245.6" fill="#b1b4c6" />
<polygon points="132.0,233.9 886.8,281.1 888.0,249.8 126.0,207.7" fill="#585e74" />
<polygon points="129.0,220.8 214.5,225.9 211.8,212.4 126.0,207.7" fill="#676b78" />
<polygon points="214.5,225.9 304.2,231.2 301.8,217.4 211.8,212.4" fill="#70747f" />
<polygon points="304.2,231.2 434.8,238.9 433.1,224.6 301.8,217.4" fill="#666a77" />
<polygon points="434.8,238.9 510.0,243.3 508.6,228.8 433.1,224.6" fill="#6e727d" />
<polygon points="510.0,243.3 669.3,252.7 668.7,237.7 508.6,228.8" fill="#676b78" />
<polygon points="669.3,252.7 768.3,258.5 768.2,243.2 668.7,237.7" fill="#71757f" />
<polygon points="768.3,258.5 887.4,265.5 888.0,249.8 768.2,243.2" fill="#686c79" />
<polygon points="886.8,281.1 889.9,277.9 891.1,247.0 888.0,249.8" fill="#9da1b8" />
<polygon points="889.9,277.9 905.0,278.8 906.4,247.8 891.1,247.0" fill="#585e74" />
<polygon points="890.5,262.5 905.7,263.4 906.4,247.8 891.1,247.0" fill="#6b6f7c" />
<polygon points="905.0,278.8 983.9,191.2 985.4,169.8 906.4,247.8" fill="#9397b2" />
<polygon points="905.7,263.4 984.6,180.5 985.4,169.8 906.4,247.8" fill="#c4c7d5" />
</g>
<g>
<polygon points="618.8,531.4 540.9,521.4 498.6,557.0 581.2,568.4" fill="#ffffff" />
<polygon points="618.8,531.4 540.9,521.4 533.3,442.0 613.6,450.7" fill="#000" fill-opacity="0.62"/>
<line x1="618.8" y1="531.4" x2="495.5" y2="515.6" stroke="#f57373" stroke-width="3.2" stroke-linecap="butt"/>
<line x1="540.9" y1="521.4" x2="533.3" y2="442.0" stroke="#f57373" stroke-width="3.2" stroke-linecap="butt"/>
<line x1="533.3" y1="442.0" x2="613.6" y2="450.7" stroke="#33d08d" stroke-width="3.2" stroke-linecap="square"/>
<line x1="618.8" y1="531.4" x2="610.3" y2="399.8" stroke="#33d08d" stroke-width="3.2" stroke-linecap="butt"/>
<polygon points="618.8,531.4 613.6,450.7 574.4,483.1 581.2,568.4" fill="#000" fill-opacity="0.55"/>
<line x1="613.6" y1="450.7" x2="574.4" y2="483.1" stroke="#31b5ef" stroke-width="3.2" stroke-linecap="round"/>
<line x1="574.4" y1="483.1" x2="581.2" y2="568.4" stroke="#33d08d" stroke-width="3.2" stroke-linecap="round"/>
<line x1="618.8" y1="531.4" x2="556.0" y2="593.3" stroke="#31b5ef" stroke-width="3.2" stroke-linecap="butt"/>
<line x1="618.8" y1="531.4" x2="610.3" y2="399.8" stroke="#33d08d" stroke-width="3.2" stroke-linecap="butt"/>
<line x1="618.8" y1="531.4" x2="607.6" y2="529.9" stroke="#f57373" stroke-width="3.2" stroke-linecap="butt"/>
<polygon points="467.2,512.0 495.6,500.9 500.7,500.2 504.4,505.3 505.4,514.4 503.3,524.0 498.9,530.6 493.8,531.6" fill="#f57373"/>
<polygon points="594.1,403.6 595.3,400.4 608.2,366.3 626.7,400.1 625.7,403.3 618.8,406.0 608.6,407.1 599.1,406.2" fill="#33d08d"/>
<polygon points="538.7,610.3 540.5,584.8 545.8,577.4 555.5,575.6 565.9,580.2 572.8,589.5 573.7,599.7 568.2,607.1 558.5,608.7" fill="#31b5ef"/>
</g>
<path d="M225.7 704.9L258.2 886.6L610.4 776.2" stroke="#fff" stroke-width="1.6" fill="none" stroke-linejoin="miter"/>
</svg>
<div class="dd" style="left:10px;width:60px"><div style="position:absolute;left:10px;top:5px;width:20px;height:20px;background:#fff"></div><div style="position:absolute;left:39px;top:11px;border:5.500px solid transparent;border-top:8px solid #7b818a;border-bottom:0"></div></div>
<div class="dd" style="left:90px;width:150px"><svg width="150" height="30" viewBox="0 0 150 30" style="position:absolute;left:0;top:0"><path d="M9 9.500H14V11.500H19.500a1 1 0 0 1 1 1V14L25 11.800V20.200L20.500 18V20a1 1 0 0 1-1 1H10a1 1 0 0 1-1-1Z" fill="#7b818a"/><rect x="10.800" y="13.300" width="8" height="6" fill="#262c35"/><rect x="10.800" y="13.300" width="4.500" height="2.200" fill="#7b818a"/><path d="M129 11.500H140L134.500 19.500Z" fill="#7b818a"/></svg><span style="position:absolute;left:35.500px;top:0;line-height:30px;color:#fff;font-weight:bold;font-size:13.400px">Perspective</span></div>
<div id="stats">Voxels: 9776
FPS: 60,0
RAM: 56,2%</div>
<div id="tip">Pivot tool</div>
<div id="coord"><span style="color:#f17a7a">31,0</span><span style="color:#c4c4c4">, </span><span style="color:#38b0e6">21,0</span></div>
<svg width="14" height="22" viewBox="0 0 14 22" style="position:absolute;left:508px;top:493px"><path d="M1 1V16.500L4.800 13.200L7.300 19.300L9.800 18.200L7.300 12.300H12Z" fill="#fff" stroke="#000" stroke-width="1.100"/></svg>
</div>
<div id="top"><div class="tb" style="left:0px;width:58px;background:#262c35"><svg width="58" height="40" viewBox="0 0 58 40"><path d="M18.6 20.6L27.7 11.4L36.9 20.6" stroke="#9da2a8" stroke-width="2.5" fill="none"/><rect x="22" y="10.3" width="2.1" height="5.5" fill="#9da2a8"/><path d="M20.2 21.9L27.7 14.6L35.3 21.9V29.8H20.2Z" fill="#9da2a8"/></svg></div><div class="tb" style="left:59px;width:40px;background:#262c35"><svg width="40" height="40" viewBox="0 0 40 40"><path d="M10 12.300a2 2 0 0 1 2-2h12.500l5.500 5.500v11.700a2 2 0 0 1-2 2H12a2 2 0 0 1-2-2Z" fill="#6d737c"/><rect x="13" y="12.800" width="12" height="4" fill="#262c35"/><circle cx="20" cy="24.300" r="3" fill="#262c35"/></svg></div><div class="tb" style="left:110px;width:40px;background:#262c35"><svg width="40" height="40" viewBox="0 0 40 40"><polygon points="17.70,7.60 28.51,13.60 17.70,19.60 6.89,13.60" fill="#6d737c"/><polygon points="6.89,13.60 17.70,19.60 17.70,31.60 6.89,25.60" fill="#6d737c"/><polygon points="17.70,19.60 28.51,13.60 28.51,25.60 17.70,31.60" fill="#6d737c"/><line x1="17.70" y1="19.60" x2="6.89" y2="13.60" stroke="#20252d" stroke-width="0.75"/><line x1="17.70" y1="19.60" x2="28.51" y2="13.60" stroke="#20252d" stroke-width="0.75"/><line x1="17.70" y1="19.60" x2="17.70" y2="31.60" stroke="#20252d" stroke-width="0.75"/><line x1="12.30" y1="10.60" x2="23.10" y2="16.60" stroke="#20252d" stroke-width="0.75"/><line x1="23.10" y1="10.60" x2="12.30" y2="16.60" stroke="#20252d" stroke-width="0.75"/><line x1="12.30" y1="16.60" x2="12.30" y2="28.60" stroke="#20252d" stroke-width="0.75"/><line x1="6.89" y1="19.60" x2="17.70" y2="25.60" stroke="#20252d" stroke-width="0.75"/><line x1="23.10" y1="16.60" x2="23.10" y2="28.60" stroke="#20252d" stroke-width="0.75"/><line x1="17.70" y1="25.60" x2="28.51" y2="19.60" stroke="#20252d" stroke-width="0.75"/><path d="M31 8.5L35 16H32V24H30V16H27Z" fill="#fff"/></svg></div><div class="tb" style="left:151px;width:40px;background:#262c35"><svg width="40" height="40" viewBox="0 0 40 40"><polygon points="18.80,7.30 30.06,13.55 18.80,19.80 7.54,13.55" fill="#6d737c"/><polygon points="7.54,13.55 18.80,19.80 18.80,32.30 7.54,26.05" fill="#6d737c"/><polygon points="18.80,19.80 30.06,13.55 30.06,26.05 18.80,32.30" fill="#6d737c"/><line x1="18.80" y1="19.80" x2="7.54" y2="13.55" stroke="#20252d" stroke-width="0.75"/><line x1="18.80" y1="19.80" x2="30.06" y2="13.55" stroke="#20252d" stroke-width="0.75"/><line x1="18.80" y1="19.80" x2="18.80" y2="32.30" stroke="#20252d" stroke-width="0.75"/><path d="M30 16H32V24H35L31 32L27 24H30Z" fill="#fff"/></svg></div><div class="tb" style="left:202px;width:40px;background:#262c35"><svg width="40" height="40" viewBox="0 0 40 40"><path d="M14 8.5V25.5H31.5M8.5 14H25.5V31.5" stroke="#6d737c" stroke-width="3" fill="none"/></svg></div><div class="tb" style="left:253px;width:40px;background:#262c35"><svg width="40" height="40" viewBox="0 0 40 40"><g transform="translate(-0.3 -0.9)"><path d="M22.5 29H16.5a2.3 2.3 0 0 1-2.3-2.3V14.3A2.3 2.3 0 0 1 16.5 12H22.7A2.3 2.3 0 0 1 25 14.3V21" stroke="#ee5c66" stroke-width="3" fill="none"/><path d="M20.6 20.300H29.400L25 27Z" fill="#ee5c66"/></g></svg></div><div class="tb" style="left:294px;width:40px;background:#262c35"><svg width="40" height="40" viewBox="0 0 40 40"><path d="M12 22.5V16.5a2.3 2.3 0 0 1 2.3-2.3H27.7A2.3 2.3 0 0 1 30 16.5V22.7A2.3 2.3 0 0 1 27.7 25H21" stroke="#1fc46c" stroke-width="3" fill="none"/><path d="M21.5 20.8V29.2L15 25Z" fill="#1fc46c"/></svg></div><div class="tb" style="left:335px;width:40px;background:#262c35"><svg width="40" height="40" viewBox="0 0 40 40"><g transform="translate(0.200 -0.300) rotate(45 19.8 19.6)"><g transform="translate(-0.3 -0.9)"><path d="M22.5 29H16.5a2.3 2.3 0 0 1-2.3-2.3V14.3A2.3 2.3 0 0 1 16.5 12H22.7A2.3 2.3 0 0 1 25 14.3V21" stroke="#18a2ea" stroke-width="3" fill="none"/><path d="M20.6 20.300H29.400L25 27Z" fill="#18a2ea"/></g></g></svg></div><div class="tb" style="left:386px;width:40px;background:#262c35"><svg width="40" height="40" viewBox="0 0 40 40"><g transform="rotate(0 20.1 20.2)"><path d="M12.7 13.5H22V10.9L31.1 15.5L22 20.1V17.5H12.7Z" fill="#ee5c66"/><path d="M27.3 22.9H18.2V20.3L9.1 24.9L18.2 29.5V26.9H27.3Z" fill="#ee5c66"/></g></svg></div><div class="tb" style="left:427px;width:40px;background:#262c35"><svg width="40" height="40" viewBox="0 0 40 40"><g transform="rotate(-90 20.1 20.2)"><path d="M12.7 13.5H22V10.9L31.1 15.5L22 20.1V17.5H12.7Z" fill="#1fc46c"/><path d="M27.3 22.9H18.2V20.3L9.1 24.9L18.2 29.5V26.9H27.3Z" fill="#1fc46c"/></g></svg></div><div class="tb" style="left:468px;width:40px;background:#262c35"><svg width="40" height="40" viewBox="0 0 40 40"><g transform="rotate(-45 20.1 20.2)"><path d="M12.7 13.5H22V10.9L31.1 15.5L22 20.1V17.5H12.7Z" fill="#18a2ea"/><path d="M27.3 22.9H18.2V20.3L9.1 24.9L18.2 29.5V26.9H27.3Z" fill="#18a2ea"/></g></svg></div><div class="tb" style="left:519px;width:40px;background:#262c35"><svg width="40" height="40" viewBox="0 0 40 40"><polygon points="20.10,7.80 32.20,14.15 20.10,20.50 8.00,14.15" fill="#6d737c"/><polygon points="8.00,14.15 20.10,20.50 20.10,33.20 8.00,26.85" fill="#6d737c"/><polygon points="20.10,20.50 32.20,14.15 32.20,26.85 20.10,33.20" fill="#6d737c"/><line x1="20.10" y1="20.50" x2="8.00" y2="14.15" stroke="#262c35" stroke-width="0.9"/><line x1="20.10" y1="20.50" x2="32.20" y2="14.15" stroke="#262c35" stroke-width="0.9"/><line x1="20.10" y1="20.50" x2="20.10" y2="33.20" stroke="#262c35" stroke-width="0.9"/><line x1="14.05" y1="10.98" x2="26.15" y2="17.32" stroke="#262c35" stroke-width="0.9"/><line x1="26.15" y1="10.98" x2="14.05" y2="17.32" stroke="#262c35" stroke-width="0.9"/><line x1="14.05" y1="17.32" x2="14.05" y2="30.03" stroke="#262c35" stroke-width="0.9"/><line x1="8.00" y1="20.50" x2="20.10" y2="26.85" stroke="#262c35" stroke-width="0.9"/><line x1="26.15" y1="17.32" x2="26.15" y2="30.03" stroke="#262c35" stroke-width="0.9"/><line x1="20.10" y1="26.85" x2="32.20" y2="20.50" stroke="#262c35" stroke-width="0.9"/><polygon points="8.00,14.15 14.05,10.98 26.15,17.32 26.15,30.03 20.10,33.20 8.00,26.85" fill="#fa5a67"/><line x1="8.00" y1="14.15" x2="14.05" y2="10.98" stroke="#c93845" stroke-width="0.7"/><line x1="14.05" y1="10.98" x2="26.15" y2="17.32" stroke="#c93845" stroke-width="0.7"/><line x1="26.15" y1="17.32" x2="26.15" y2="30.03" stroke="#c93845" stroke-width="0.7"/><line x1="26.15" y1="30.03" x2="20.10" y2="33.20" stroke="#c93845" stroke-width="0.7"/><line x1="20.10" y1="33.20" x2="8.00" y2="26.85" stroke="#c93845" stroke-width="0.7"/><line x1="8.00" y1="26.85" x2="8.00" y2="14.15" stroke="#c93845" stroke-width="0.7"/><line x1="14.05" y1="10.98" x2="14.05" y2="10.98" stroke="#c93845" stroke-width="0.7"/><line x1="8.00" y1="14.15" x2="20.10" y2="20.50" stroke="#c93845" stroke-width="0.7"/><line x1="20.10" y1="20.50" x2="20.10" y2="33.20" stroke="#c93845" stroke-width="0.7"/><line x1="20.10" y1="20.50" x2="26.15" y2="17.32" stroke="#c93845" stroke-width="0.7"/></svg></div><div class="tb" style="left:560px;width:40px;background:#262c35"><svg width="40" height="40" viewBox="0 0 40 40"><polygon points="20.10,7.80 32.20,14.15 20.10,20.50 8.00,14.15" fill="#6d737c"/><polygon points="8.00,14.15 20.10,20.50 20.10,33.20 8.00,26.85" fill="#6d737c"/><polygon points="20.10,20.50 32.20,14.15 32.20,26.85 20.10,33.20" fill="#6d737c"/><line x1="20.10" y1="20.50" x2="8.00" y2="14.15" stroke="#262c35" stroke-width="0.9"/><line x1="20.10" y1="20.50" x2="32.20" y2="14.15" stroke="#262c35" stroke-width="0.9"/><line x1="20.10" y1="20.50" x2="20.10" y2="33.20" stroke="#262c35" stroke-width="0.9"/><line x1="14.05" y1="10.98" x2="26.15" y2="17.32" stroke="#262c35" stroke-width="0.9"/><line x1="26.15" y1="10.98" x2="14.05" y2="17.32" stroke="#262c35" stroke-width="0.9"/><line x1="14.05" y1="17.32" x2="14.05" y2="30.03" stroke="#262c35" stroke-width="0.9"/><line x1="8.00" y1="20.50" x2="20.10" y2="26.85" stroke="#262c35" stroke-width="0.9"/><line x1="26.15" y1="17.32" x2="26.15" y2="30.03" stroke="#262c35" stroke-width="0.9"/><line x1="20.10" y1="26.85" x2="32.20" y2="20.50" stroke="#262c35" stroke-width="0.9"/><polygon points="20.10,7.80 32.20,14.15 32.20,20.50 20.10,26.85 8.00,20.50 8.00,14.15" fill="#0fcf6e"/><line x1="20.10" y1="7.80" x2="32.20" y2="14.15" stroke="#0a9a50" stroke-width="0.7"/><line x1="32.20" y1="14.15" x2="32.20" y2="20.50" stroke="#0a9a50" stroke-width="0.7"/><line x1="32.20" y1="20.50" x2="20.10" y2="26.85" stroke="#0a9a50" stroke-width="0.7"/><line x1="20.10" y1="26.85" x2="8.00" y2="20.50" stroke="#0a9a50" stroke-width="0.7"/><line x1="8.00" y1="20.50" x2="8.00" y2="14.15" stroke="#0a9a50" stroke-width="0.7"/><line x1="8.00" y1="14.15" x2="20.10" y2="7.80" stroke="#0a9a50" stroke-width="0.7"/><line x1="8.00" y1="14.15" x2="20.10" y2="20.50" stroke="#0a9a50" stroke-width="0.7"/><line x1="20.10" y1="20.50" x2="32.20" y2="14.15" stroke="#0a9a50" stroke-width="0.7"/><line x1="20.10" y1="20.50" x2="20.10" y2="26.85" stroke="#0a9a50" stroke-width="0.7"/></svg></div><div class="tb" style="left:601px;width:40px;background:#262c35"><svg width="40" height="40" viewBox="0 0 40 40"><polygon points="20.10,7.80 32.20,14.15 20.10,20.50 8.00,14.15" fill="#6d737c"/><polygon points="8.00,14.15 20.10,20.50 20.10,33.20 8.00,26.85" fill="#6d737c"/><polygon points="20.10,20.50 32.20,14.15 32.20,26.85 20.10,33.20" fill="#6d737c"/><line x1="20.10" y1="20.50" x2="8.00" y2="14.15" stroke="#262c35" stroke-width="0.9"/><line x1="20.10" y1="20.50" x2="32.20" y2="14.15" stroke="#262c35" stroke-width="0.9"/><line x1="20.10" y1="20.50" x2="20.10" y2="33.20" stroke="#262c35" stroke-width="0.9"/><line x1="14.05" y1="10.98" x2="26.15" y2="17.32" stroke="#262c35" stroke-width="0.9"/><line x1="26.15" y1="10.98" x2="14.05" y2="17.32" stroke="#262c35" stroke-width="0.9"/><line x1="14.05" y1="17.32" x2="14.05" y2="30.03" stroke="#262c35" stroke-width="0.9"/><line x1="8.00" y1="20.50" x2="20.10" y2="26.85" stroke="#262c35" stroke-width="0.9"/><line x1="26.15" y1="17.32" x2="26.15" y2="30.03" stroke="#262c35" stroke-width="0.9"/><line x1="20.10" y1="26.85" x2="32.20" y2="20.50" stroke="#262c35" stroke-width="0.9"/><polygon points="26.15,10.98 32.20,14.15 32.20,26.85 20.10,33.20 14.05,30.03 14.05,17.32" fill="#05a8f5"/><line x1="26.15" y1="10.98" x2="32.20" y2="14.15" stroke="#0580bd" stroke-width="0.7"/><line x1="32.20" y1="14.15" x2="32.20" y2="26.85" stroke="#0580bd" stroke-width="0.7"/><line x1="32.20" y1="26.85" x2="20.10" y2="33.20" stroke="#0580bd" stroke-width="0.7"/><line x1="20.10" y1="33.20" x2="14.05" y2="30.03" stroke="#0580bd" stroke-width="0.7"/><line x1="14.05" y1="30.03" x2="14.05" y2="17.32" stroke="#0580bd" stroke-width="0.7"/><line x1="14.05" y1="17.32" x2="26.15" y2="10.98" stroke="#0580bd" stroke-width="0.7"/><line x1="14.05" y1="17.32" x2="20.10" y2="20.50" stroke="#0580bd" stroke-width="0.7"/><line x1="20.10" y1="20.50" x2="32.20" y2="14.15" stroke="#0580bd" stroke-width="0.7"/><line x1="20.10" y1="20.50" x2="20.10" y2="33.20" stroke="#0580bd" stroke-width="0.7"/></svg></div><div class="tb" style="left:652px;width:8px;background:#f25c69"></div><div class="tb num" style="left:660px;width:61px">62</div><div class="tb" style="left:732px;width:8px;background:#10c56c"></div><div class="tb num" style="left:740px;width:61px">33</div><div class="tb" style="left:812px;width:8px;background:#0aa5ee"></div><div class="tb num" style="left:820px;width:61px">42</div><div class="tb" style="left:892px;width:40px;background:#262c35"><svg width="40" height="40" viewBox="0 0 40 40"><polygon points="20.10,7.30 32.10,13.60 32.10,26.20 20.10,32.50 8.10,26.20 8.10,13.60" fill="#6d737c"/><line x1="14.10" y1="16.75" x2="8.10" y2="13.60" stroke="#262b33" stroke-width="0.75"/><line x1="26.10" y1="16.75" x2="32.10" y2="13.60" stroke="#262b33" stroke-width="0.75"/><line x1="20.10" y1="26.20" x2="20.10" y2="32.50" stroke="#262b33" stroke-width="0.75"/><line x1="20.10" y1="13.60" x2="26.10" y2="16.75" stroke="#262b33" stroke-width="0.75"/><line x1="26.10" y1="16.75" x2="26.10" y2="23.05" stroke="#262b33" stroke-width="0.75"/><line x1="26.10" y1="23.05" x2="20.10" y2="26.20" stroke="#262b33" stroke-width="0.75"/><line x1="20.10" y1="26.20" x2="14.10" y2="23.05" stroke="#262b33" stroke-width="0.75"/><line x1="14.10" y1="23.05" x2="14.10" y2="16.75" stroke="#262b33" stroke-width="0.75"/><line x1="14.10" y1="16.75" x2="20.10" y2="13.60" stroke="#262b33" stroke-width="0.75"/><line x1="20.10" y1="19.90" x2="20.10" y2="13.60" stroke="#262b33" stroke-width="0.75"/><line x1="20.10" y1="19.90" x2="14.10" y2="23.05" stroke="#262b33" stroke-width="0.75"/><line x1="20.10" y1="19.90" x2="26.10" y2="23.05" stroke="#262b33" stroke-width="0.75"/><line x1="8.10" y1="19.90" x2="20.10" y2="26.20" stroke="#262b33" stroke-width="0.75"/><line x1="32.10" y1="19.90" x2="20.10" y2="26.20" stroke="#262b33" stroke-width="0.75"/><line x1="14.10" y1="10.45" x2="20.10" y2="13.60" stroke="#262b33" stroke-width="0.75"/><line x1="26.10" y1="10.45" x2="20.10" y2="13.60" stroke="#262b33" stroke-width="0.75"/><line x1="14.10" y1="23.05" x2="14.10" y2="29.35" stroke="#262b33" stroke-width="0.75"/><line x1="26.10" y1="23.05" x2="26.10" y2="29.35" stroke="#262b33" stroke-width="0.75"/></svg></div><div class="tb" style="left:933px;width:40px;background:#262c35"><svg width="40" height="40" viewBox="0 0 40 40"><polygon points="20.10,7.30 32.10,13.60 32.10,26.20 20.10,32.50 8.10,26.20 8.10,13.60" fill="#6d737c"/><line x1="14.10" y1="16.75" x2="8.10" y2="13.60" stroke="#262b33" stroke-width="0.75"/><line x1="26.10" y1="16.75" x2="32.10" y2="13.60" stroke="#262b33" stroke-width="0.75"/><line x1="20.10" y1="26.20" x2="20.10" y2="32.50" stroke="#262b33" stroke-width="0.75"/><line x1="20.10" y1="13.60" x2="26.10" y2="16.75" stroke="#262b33" stroke-width="0.75"/><line x1="26.10" y1="16.75" x2="26.10" y2="23.05" stroke="#262b33" stroke-width="0.75"/><line x1="26.10" y1="23.05" x2="20.10" y2="26.20" stroke="#262b33" stroke-width="0.75"/><line x1="20.10" y1="26.20" x2="14.10" y2="23.05" stroke="#262b33" stroke-width="0.75"/><line x1="14.10" y1="23.05" x2="14.10" y2="16.75" stroke="#262b33" stroke-width="0.75"/><line x1="14.10" y1="16.75" x2="20.10" y2="13.60" stroke="#262b33" stroke-width="0.75"/><line x1="20.10" y1="19.90" x2="20.10" y2="13.60" stroke="#262b33" stroke-width="0.75"/><line x1="20.10" y1="19.90" x2="14.10" y2="23.05" stroke="#262b33" stroke-width="0.75"/><line x1="20.10" y1="19.90" x2="26.10" y2="23.05" stroke="#262b33" stroke-width="0.75"/><line x1="8.10" y1="19.90" x2="20.10" y2="26.20" stroke="#262b33" stroke-width="0.75"/><line x1="32.10" y1="19.90" x2="20.10" y2="26.20" stroke="#262b33" stroke-width="0.75"/></svg></div><div class="tb" style="left:974px;width:40px;background:#262c35"><svg width="40" height="40" viewBox="0 0 40 40"><polygon points="20.10,7.30 32.10,13.60 32.10,26.20 20.10,32.50 8.10,26.20 8.10,13.60" fill="#6d737c"/><line x1="13.74" y1="16.56" x2="8.10" y2="13.60" stroke="#262b33" stroke-width="0.75"/><line x1="26.46" y1="16.56" x2="32.10" y2="13.60" stroke="#262b33" stroke-width="0.75"/><line x1="20.10" y1="26.58" x2="20.10" y2="32.50" stroke="#262b33" stroke-width="0.75"/><line x1="20.10" y1="13.22" x2="26.46" y2="16.56" stroke="#262b33" stroke-width="0.75"/><line x1="26.46" y1="16.56" x2="26.46" y2="23.24" stroke="#262b33" stroke-width="0.75"/><line x1="26.46" y1="23.24" x2="20.10" y2="26.58" stroke="#262b33" stroke-width="0.75"/><line x1="20.10" y1="26.58" x2="13.74" y2="23.24" stroke="#262b33" stroke-width="0.75"/><line x1="13.74" y1="23.24" x2="13.74" y2="16.56" stroke="#262b33" stroke-width="0.75"/><line x1="13.74" y1="16.56" x2="20.10" y2="13.22" stroke="#262b33" stroke-width="0.75"/></svg></div><div class="tb" style="left:1015px;width:40px;background:#0a84ff"><svg width="40" height="40" viewBox="0 0 40 40"><polygon points="20.30,6.90 31.61,13.30 31.61,26.10 20.30,32.50 8.99,26.10 8.99,13.30" fill="#fff"/></svg></div><div class="tb" style="left:1066px;width:40px;background:#262c35"><svg width="40" height="40" viewBox="0 0 40 40"><circle cx="20.5" cy="19.900" r="9.600" stroke="#6d737c" stroke-width="2.800" fill="none"/><path d="M20.5 6.900V14.900M20.500 24.900V32.900M7.500 19.900H15.500M25.500 19.900H33.500" stroke="#6d737c" stroke-width="2.800"/></svg></div></div>
<div id="side"><div class="lbl" style="top:0;height:31px;line-height:32px">Mode</div><div class="sb" style="top:31px;background:#262c35"><svg width="38" height="40" viewBox="0 0 38 40"><path d="M9.6 14V10.600H13M15.800 10.600H20.200M23 10.600H26.400V14M26.400 16.800V19.500M9.600 16.800V21.200M9.600 24V27.400H13M15.800 27.400H19" stroke="#6d737c" stroke-width="1.800" fill="none"/><path d="M20.700 20.300L30.700 29.600L26.300 29.900L28.600 35.100L26.600 36L24.300 30.800L20.700 33.800Z" fill="#6d737c"/></svg></div><div class="sb" style="top:72px;background:#262c35"><svg width="38" height="40" viewBox="0 0 38 40"><rect x="8" y="10" width="9.500" height="9.500" fill="#6d737c"/><rect x="8" y="20.500" width="9.500" height="9.500" fill="#6d737c"/><rect x="18.500" y="20.500" width="9.500" height="9.500" fill="#6d737c"/></svg></div><div class="sb" style="top:113px;background:#262c35"><svg width="38" height="40" viewBox="0 0 38 40"><path d="M19 8.500C12 8.500 6.500 13.500 6.500 20S12 31.500 18 31.500c1.800 0 2.800-1.200 2.800-2.500 0-.8-.4-1.400-.8-1.900-.4-.5-.7-1-.7-1.700 0-1.500 1.200-2.600 2.700-2.600H25.500c3.600 0 6.500-2.600 6.500-6 0-4.800-5.800-8.300-13-8.300Z" fill="#6d737c"/><circle cx="11.500" cy="19.500" r="1.900" fill="#262c35"/><circle cx="15" cy="13.800" r="1.900" fill="#262c35"/><circle cx="22" cy="13" r="1.900" fill="#262c35"/><circle cx="27.300" cy="17.300" r="1.900" fill="#262c35"/></svg></div><div class="sb" style="top:154px;background:#262c35"><svg width="38" height="40" viewBox="0 0 38 40"><rect x="-9.900" y="-4.300" width="19.800" height="8.600" rx="1.500" transform="translate(17.600 20.300) rotate(-42)" fill="#6d737c"/><rect x="18" y="28.600" width="12" height="1.600" fill="#6d737c"/></svg></div><div class="lbl" style="top:194px;height:32px;line-height:34px">Tools</div><div class="sb" style="top:226px;background:#262c35"><svg width="38" height="40" viewBox="0 0 38 40"><path d="M8 29V24.500L21.500 11L26 15.500L12.500 29Z" fill="#6d737c"/><path d="M23 9.500L24.800 7.700a1.500 1.500 0 0 1 2.100 0L29.300 10.100a1.500 1.500 0 0 1 0 2.100L27.500 14Z" fill="#6d737c"/><rect x="15" y="28.400" width="13" height="1.600" fill="#6d737c"/></svg></div><div class="sb" style="top:267px;background:#262c35"><svg width="38" height="40" viewBox="0 0 38 40"><path d="M8.500 30.500L28.500 10" stroke="#6d737c" stroke-width="2.200"/></svg></div><div class="sb" style="top:308px;background:#262c35"><svg width="38" height="40" viewBox="0 0 38 40"><rect x="6" y="13" width="24.500" height="14" stroke="#6d737c" stroke-width="1.800" fill="none"/></svg></div><div class="sb" style="top:349px;background:#262c35"><svg width="38" height="40" viewBox="0 0 38 40"><polygon points="18.10,7.70 29.19,13.80 18.10,19.90 7.01,13.80" fill="#6d737c"/><polygon points="7.01,13.80 18.10,19.90 18.10,32.10 7.01,26.00" fill="#6d737c"/><polygon points="18.10,19.90 29.19,13.80 29.19,26.00 18.10,32.10" fill="#6d737c"/><line x1="18.10" y1="19.90" x2="7.01" y2="13.80" stroke="#4f555e" stroke-width="0.7"/><line x1="18.10" y1="19.90" x2="29.19" y2="13.80" stroke="#4f555e" stroke-width="0.7"/><line x1="18.10" y1="19.90" x2="18.10" y2="32.10" stroke="#4f555e" stroke-width="0.7"/><line x1="14.40" y1="9.73" x2="25.50" y2="15.83" stroke="#4f555e" stroke-width="0.7"/><line x1="21.80" y1="9.73" x2="10.70" y2="15.83" stroke="#4f555e" stroke-width="0.7"/><line x1="10.70" y1="15.83" x2="10.70" y2="28.03" stroke="#4f555e" stroke-width="0.7"/><line x1="7.01" y1="17.87" x2="18.10" y2="23.97" stroke="#4f555e" stroke-width="0.7"/><line x1="21.80" y1="17.87" x2="21.80" y2="30.07" stroke="#4f555e" stroke-width="0.7"/><line x1="18.10" y1="23.97" x2="29.19" y2="17.87" stroke="#4f555e" stroke-width="0.7"/><line x1="10.70" y1="11.77" x2="21.80" y2="17.87" stroke="#4f555e" stroke-width="0.7"/><line x1="25.50" y1="11.77" x2="14.40" y2="17.87" stroke="#4f555e" stroke-width="0.7"/><line x1="14.40" y1="17.87" x2="14.40" y2="30.07" stroke="#4f555e" stroke-width="0.7"/><line x1="7.01" y1="21.93" x2="18.10" y2="28.03" stroke="#4f555e" stroke-width="0.7"/><line x1="25.50" y1="15.83" x2="25.50" y2="28.03" stroke="#4f555e" stroke-width="0.7"/><line x1="18.10" y1="28.03" x2="29.19" y2="21.93" stroke="#4f555e" stroke-width="0.7"/></svg></div><div class="sb" style="top:390px;background:#262c35"><svg width="38" height="40" viewBox="0 0 38 40"><polygon points="18.10,7.50 29.19,13.60 29.19,25.80 18.10,31.90 7.01,25.80 7.01,13.60" fill="none" stroke="#6d737c" stroke-width="1"/><line x1="7.01" y1="13.60" x2="11.00" y2="15.80" stroke="#6d737c" stroke-width="1"/><polygon points="22.09,9.70 29.19,13.60 29.19,25.80 18.10,31.90 11.00,28.00 11.00,15.80" fill="#6d737c"/><line x1="11.00" y1="15.80" x2="18.10" y2="19.70" stroke="#4f555e" stroke-width="0.7"/><line x1="18.10" y1="19.70" x2="29.19" y2="13.60" stroke="#4f555e" stroke-width="0.7"/><line x1="18.10" y1="19.70" x2="18.10" y2="31.90" stroke="#4f555e" stroke-width="0.7"/><line x1="11.00" y1="19.86" x2="18.10" y2="23.77" stroke="#4f555e" stroke-width="0.7"/><line x1="18.10" y1="23.77" x2="29.19" y2="17.67" stroke="#4f555e" stroke-width="0.7"/><line x1="21.80" y1="17.67" x2="21.80" y2="29.87" stroke="#4f555e" stroke-width="0.7"/><line x1="18.40" y1="11.73" x2="25.50" y2="15.63" stroke="#4f555e" stroke-width="0.7"/><line x1="11.00" y1="23.93" x2="18.10" y2="27.83" stroke="#4f555e" stroke-width="0.7"/><line x1="18.10" y1="27.83" x2="29.19" y2="21.73" stroke="#4f555e" stroke-width="0.7"/><line x1="25.50" y1="15.63" x2="25.50" y2="27.83" stroke="#4f555e" stroke-width="0.7"/><line x1="14.70" y1="13.76" x2="21.80" y2="17.67" stroke="#4f555e" stroke-width="0.7"/><line x1="14.55" y1="17.75" x2="14.55" y2="29.95" stroke="#4f555e" stroke-width="0.7"/><line x1="25.64" y1="11.65" x2="14.55" y2="17.75" stroke="#4f555e" stroke-width="0.7"/></svg></div><div class="sb" style="top:431px;background:#262c35"><svg width="38" height="40" viewBox="0 0 38 40"><path d="M18 11.400L26.300 20.400L15.200 30.100L6.900 21.100Z" fill="#6d737c"/><path d="M12.300 9.800L15.300 13.800" stroke="#6d737c" stroke-width="2.300" stroke-linecap="round"/><path d="M12.600 10.200L14.900 13.300" stroke="#262c35" stroke-width="0.700" stroke-linecap="round"/><path d="M26.300 21.100c1.600 2.100 2.400 3.300 2.400 4.400a2.400 2.400 0 0 1-4.800 0c0-1.100.8-2.300 2.400-4.400Z" fill="#6d737c"/></svg></div><div class="sb" style="top:502px;background:#0a84ff"><svg width="38" height="40" viewBox="0 0 38 40"><path d="M9.500 31.500L11 26L20.500 16.500L24 20L14.500 29.500Z" fill="#fff"/><path d="M19.500 13.500L27 21" stroke="#fff" stroke-width="2.600" stroke-linecap="round"/><path d="M22.500 15L26.500 11a2.300 2.300 0 0 1 3.300 3.300L25.800 18.300Z" fill="#fff"/></svg></div><div class="sb" style="top:543px;background:#0a84ff"><svg width="38" height="40" viewBox="0 0 38 40"><polygon points="18.10,7.70 29.19,13.80 18.10,19.90 7.01,13.80" fill="#fff"/><polygon points="7.01,13.80 18.10,19.90 18.10,32.10 7.01,26.00" fill="#fff"/><polygon points="18.10,19.90 29.19,13.80 29.19,26.00 18.10,32.10" fill="#fff"/><line x1="18.10" y1="19.90" x2="7.01" y2="13.80" stroke="#8cc6ff" stroke-width="0.65"/><line x1="18.10" y1="19.90" x2="29.19" y2="13.80" stroke="#8cc6ff" stroke-width="0.65"/><line x1="18.10" y1="19.90" x2="18.10" y2="32.10" stroke="#8cc6ff" stroke-width="0.65"/><line x1="14.40" y1="9.73" x2="25.50" y2="15.83" stroke="#8cc6ff" stroke-width="0.65"/><line x1="21.80" y1="9.73" x2="10.70" y2="15.83" stroke="#8cc6ff" stroke-width="0.65"/><line x1="10.70" y1="15.83" x2="10.70" y2="28.03" stroke="#8cc6ff" stroke-width="0.65"/><line x1="7.01" y1="17.87" x2="18.10" y2="23.97" stroke="#8cc6ff" stroke-width="0.65"/><line x1="21.80" y1="17.87" x2="21.80" y2="30.07" stroke="#8cc6ff" stroke-width="0.65"/><line x1="18.10" y1="23.97" x2="29.19" y2="17.87" stroke="#8cc6ff" stroke-width="0.65"/><line x1="10.70" y1="11.77" x2="21.80" y2="17.87" stroke="#8cc6ff" stroke-width="0.65"/><line x1="25.50" y1="11.77" x2="14.40" y2="17.87" stroke="#8cc6ff" stroke-width="0.65"/><line x1="14.40" y1="17.87" x2="14.40" y2="30.07" stroke="#8cc6ff" stroke-width="0.65"/><line x1="7.01" y1="21.93" x2="18.10" y2="28.03" stroke="#8cc6ff" stroke-width="0.65"/><line x1="25.50" y1="15.83" x2="25.50" y2="28.03" stroke="#8cc6ff" stroke-width="0.65"/><line x1="18.10" y1="28.03" x2="29.19" y2="21.93" stroke="#8cc6ff" stroke-width="0.65"/><circle cx="25.500" cy="28.500" r="3.600" fill="#0a84ff"/><circle cx="25.500" cy="28.500" r="2.400" fill="#fff"/></svg></div><div class="sb" style="top:584px;background:#262c35"><svg width="38" height="40" viewBox="0 0 38 40"><path d="M7 9.500H30" stroke="#6d737c" stroke-width="2"/><rect x="9.500" y="10.500" width="18" height="11.500" stroke="#6d737c" stroke-width="2" fill="none"/><path d="M18.500 22V31M18.500 25.500L11 31M18.500 25.500L26 31" stroke="#6d737c" stroke-width="2" fill="none"/></svg></div><div style="position:absolute;left:-1px;top:541.600px;width:34px;height:36.800px;border:3px solid #d83c4b;border-radius:5px;box-sizing:content-box"></div></div>
</body></html>
